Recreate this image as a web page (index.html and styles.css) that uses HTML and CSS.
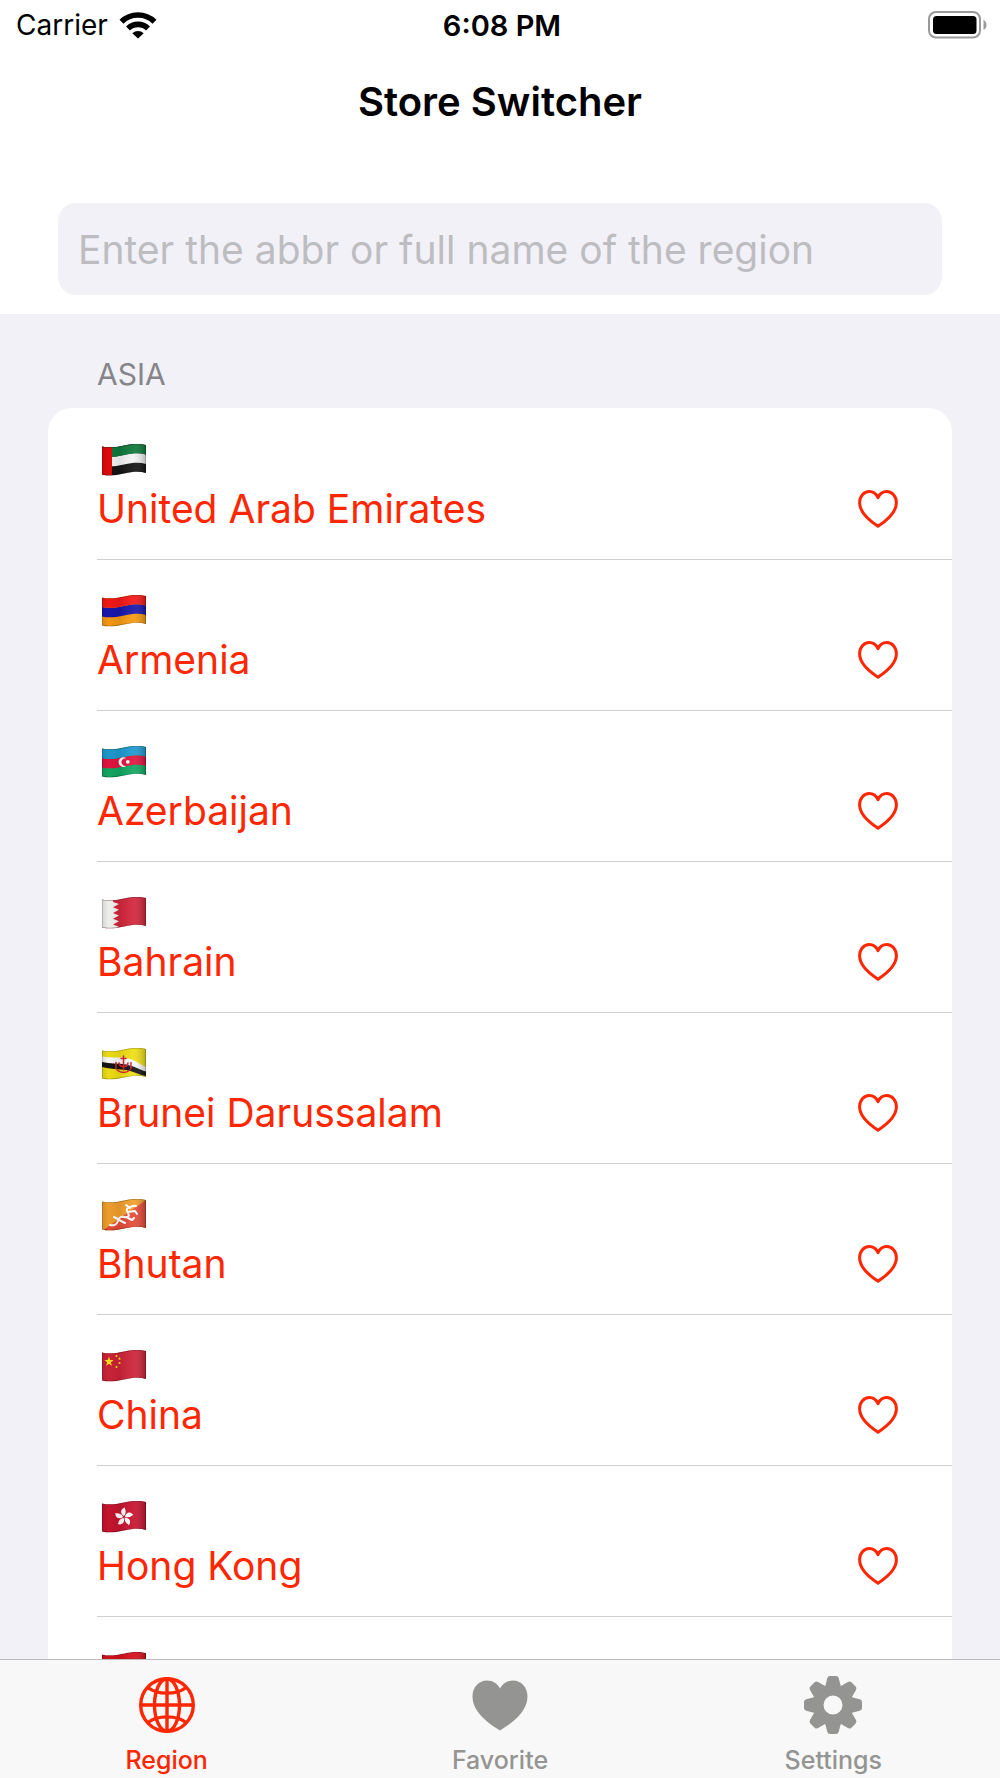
FILE: index.html
```html
<!DOCTYPE html>
<html lang="en">
<head>
  <meta charset="UTF-8" />
  <meta name="viewport" content="width=device-width, initial-scale=1.0"/>
  <title>Store Switcher</title>
  <link rel="stylesheet" href="styles.css">
</head>
<body>
  <!-- Shared shapes for flags and hearts -->
  <svg class="defs" aria-hidden="true">
    <defs>
      <clipPath id="flagClip">
        <path d="M0 2.5c6 1.5 13 1 22-1s16-2.2 22-.5v28c-6-1.7-13-1.5-22 .5s-16 2.5-22 1z"/>
      </clipPath>
      <linearGradient id="flagShade">
        <stop offset="0" stop-opacity=".12"/>
        <stop offset=".15" stop-opacity=".02"/>
        <stop offset=".4" stop-opacity=".08"/>
        <stop offset=".7" stop-color="#fff" stop-opacity=".06"/>
        <stop offset="1" stop-opacity=".25"/>
      </linearGradient>
      <path id="band" d="M0 2.5c6 1.5 13 1 22-1s16-2.2 22-.5v9.5c-6-1.7-13-1.5-22 .5s-16 2.5-22 1z"/>
      <g id="shade">
        <rect width="44" height="32" fill="url(#flagShade)"/>
        <path d="M0 2.5c6 1.5 13 1 22-1s16-2.2 22-.5v28c-6-1.7-13-1.5-22 .5s-16 2.5-22 1z" fill="none" stroke="#000" stroke-opacity=".25" stroke-width="1.4"/>
      </g>
      <path id="heart" d="M21 37.2C13 32 2.6 24 2.6 13.8C2.6 7.2 7 2.6 12.2 2.6C16 2.6 19.2 4.8 21 8.6C22.8 4.8 26 2.6 29.8 2.6C35 2.6 39.4 7.2 39.4 13.8C39.4 24 29 32 21 37.2Z"/>
    </defs>
  </svg>

  <div class="app">
    <div class="status-bar">
      <div class="carrier">
        <span>Carrier</span>
        <svg width="38" height="28" viewBox="0 0 38 28" aria-hidden="true">
          <g fill="none" stroke="#000" stroke-width="5.6">
            <path d="M2.5 10.8a23.5 23.5 0 0 1 33 0"/>
            <path d="M9 17.5a14.2 14.2 0 0 1 20 0"/>
          </g>
          <path d="M13.3 22.2a8.2 8.2 0 0 1 11.4 0L19 27.6z"/>
        </svg>
      </div>
      <time class="clock">6:08 PM</time>
      <svg class="battery" width="60" height="28" viewBox="0 0 60 28" role="img" aria-label="Battery full">
        <rect x="1" y="1" width="51" height="25.5" rx="7" fill="none" stroke="#999" stroke-width="2"/>
        <rect x="5" y="5" width="43.5" height="18" rx="3.5"/>
        <path d="M55.5 9c4 1.5 4 8.5 0 10z" fill="#999"/>
      </svg>
    </div>

    <header class="header">
      <h1>Store Switcher</h1>
      <input type="search" class="search" placeholder="Enter the abbr or full name of the region" aria-label="Region">
    </header>

    <main class="content">
      <h2>ASIA</h2>
      <ul class="regions">
        <li>
          <svg class="flag" viewBox="0 0 44 32" aria-hidden="true">
            <g clip-path="url(#flagClip)">
              <rect width="44" height="32" fill="#151515"/>
              <use href="#band" y="9.4" fill="#f4f4f4"/>
              <use href="#band" fill="#0f7a3c"/>
              <rect width="10" height="32" fill="#e40a0a"/>
              <use href="#shade"/>
            </g>
          </svg>
          <span class="name">United Arab Emirates</span>
          <button class="fav" aria-label="Add United Arab Emirates to favorites"><svg viewBox="0 0 42 40"><use href="#heart"/></svg></button>
        </li>
        <li>
          <svg class="flag" viewBox="0 0 44 32" aria-hidden="true">
            <g clip-path="url(#flagClip)">
              <rect width="44" height="32" fill="#f79a12"/>
              <use href="#band" y="9.4" fill="#1a17ad"/>
              <use href="#band" fill="#f51818"/>
              <use href="#shade"/>
            </g>
          </svg>
          <span class="name">Armenia</span>
          <button class="fav" aria-label="Add Armenia to favorites"><svg viewBox="0 0 42 40"><use href="#heart"/></svg></button>
        </li>
        <li>
          <svg class="flag" viewBox="0 0 44 32" aria-hidden="true">
            <g clip-path="url(#flagClip)">
              <rect width="44" height="32" fill="#12a862"/>
              <use href="#band" y="9.4" fill="#e2143f"/>
              <use href="#band" fill="#1e9ad0"/>
              <path d="M24.5 12.5a4.8 4.8 0 1 0 0 7.2a3.8 3.8 0 1 1 0-7.2z" fill="#fff"/>
              <circle cx="25.8" cy="15.8" r="1.9" fill="#fff"/>
              <use href="#shade"/>
            </g>
          </svg>
          <span class="name">Azerbaijan</span>
          <button class="fav" aria-label="Add Azerbaijan to favorites"><svg viewBox="0 0 42 40"><use href="#heart"/></svg></button>
        </li>
        <li>
          <svg class="flag" viewBox="0 0 44 32" aria-hidden="true">
            <g clip-path="url(#flagClip)">
              <rect width="44" height="32" fill="#d3263b"/>
              <path d="M0 0h11v5l6 2-6 3.3 6 2.5-6 3.2 6 2.5-6 3.2 6 2.5-6 3.2 6 2.4-6 3H0z" fill="#f3f3f1"/>
              <use href="#shade"/>
            </g>
          </svg>
          <span class="name">Bahrain</span>
          <button class="fav" aria-label="Add Bahrain to favorites"><svg viewBox="0 0 42 40"><use href="#heart"/></svg></button>
        </li>
        <li>
          <svg class="flag" viewBox="0 0 44 32" aria-hidden="true">
            <g clip-path="url(#flagClip)">
              <rect width="44" height="32" fill="#f0df16"/>
              <path d="M0 8.500C8 10 16 9 24 10s13 6 20 9v6c-7-1-13-4-20-5.500S8 17 0 15z" fill="#fafafa"/>
              <path d="M0 14c8 2 16 1 24 2.500s13 5 20 7v4.500c-7-1-13-5-20-6S8 21 0 19z" fill="#141414"/>
              <g fill="none" stroke="#d5202c" stroke-width="1.5" stroke-linecap="round">
                <path d="M21.5 8v14M19 10.500h5M17 15c1 5 8 5 9 0M14 14.500v6M29 14.500v6M15 22c4 3 9 3 13 0"/>
              </g>
              <use href="#shade"/>
            </g>
          </svg>
          <span class="name">Brunei Darussalam</span>
          <button class="fav" aria-label="Add Brunei Darussalam to favorites"><svg viewBox="0 0 42 40"><use href="#heart"/></svg></button>
        </li>
        <li>
          <svg class="flag" viewBox="0 0 44 32" aria-hidden="true">
            <g clip-path="url(#flagClip)">
              <rect width="44" height="32" fill="#f2a02c"/>
              <path d="M0 32L44 1v31z" fill="#e54c38"/>
              <path d="M8 26c4 1 7-1 8-4s2-5 6-4 6-1 4-4-2-5 2-6 4-2 6-1M26 13l7-1 2 3M24 18l6 3 2-2M17 21l6 3M28 9l-4-3M16 20l-4-2" fill="none" stroke="#fff" stroke-width="2" stroke-linecap="round" stroke-linejoin="round"/>
              <use href="#shade"/>
            </g>
          </svg>
          <span class="name">Bhutan</span>
          <button class="fav" aria-label="Add Bhutan to favorites"><svg viewBox="0 0 42 40"><use href="#heart"/></svg></button>
        </li>
        <li>
          <svg class="flag" viewBox="0 0 44 32" aria-hidden="true">
            <g clip-path="url(#flagClip)">
              <rect width="44" height="32" fill="#cd2438"/>
              <g fill="#ffe11a">
                <path d="M7 6.8l1.2 3.3h3.5l-2.8 2.2 1 3.4L7 13.7l-2.9 2 1-3.4-2.8-2.2h3.500z"/>
                <circle cx="14.5" cy="6" r="1.1"/>
                <circle cx="17.5" cy="8.7" r="1.1"/>
                <circle cx="17.5" cy="13" r="1.1"/>
                <circle cx="14.5" cy="17" r="1.1"/>
              </g>
              <use href="#shade"/>
            </g>
          </svg>
          <span class="name">China</span>
          <button class="fav" aria-label="Add China to favorites"><svg viewBox="0 0 42 40"><use href="#heart"/></svg></button>
        </li>
        <li>
          <svg class="flag" viewBox="0 0 44 32" aria-hidden="true">
            <g clip-path="url(#flagClip)">
              <rect width="44" height="32" fill="#c8142f"/>
              <g fill="#fff" transform="translate(22 16)">
                <path id="petal" d="M0-1C-4-3-4-8 1-9.5C.5-7.5 3.5-5.5 0-1z"/>
                <use href="#petal" transform="rotate(72)"/>
                <use href="#petal" transform="rotate(144)"/>
                <use href="#petal" transform="rotate(216)"/>
                <use href="#petal" transform="rotate(288)"/>
              </g>
              <use href="#shade"/>
            </g>
          </svg>
          <span class="name">Hong Kong</span>
          <button class="fav" aria-label="Add Hong Kong to favorites"><svg viewBox="0 0 42 40"><use href="#heart"/></svg></button>
        </li>
        <li>
          <svg class="flag" viewBox="0 0 44 32" aria-hidden="true">
            <g clip-path="url(#flagClip)">
              <rect width="44" height="32" fill="#f4f4f4"/>
              <use href="#band" y="5" fill="#d3101c"/>
              <use href="#band" fill="#d3101c"/>
              <use href="#shade"/>
            </g>
          </svg>
        </li>
      </ul>
    </main>

    <nav class="tabs">
      <a href="#region" class="active" aria-current="page">
        <svg width="58" height="58" viewBox="0 0 58 58" aria-hidden="true">
          <g fill="none" stroke="currentColor" stroke-width="3.4">
            <circle cx="29" cy="29" r="26.3"/>
            <path d="M29 2.5v53M2.5 29h53"/>
            <ellipse cx="29" cy="29" rx="12.5" ry="26.3"/>
            <path d="M10 11.5c9 7.5 29 7.5 38 0M10 46.5c9-7.5 29-7.5 38 0"/>
          </g>
        </svg>
        <span>Region</span>
      </a>
      <a href="#favorite">
        <svg width="58" height="58" viewBox="0 0 58 58" aria-hidden="true">
          <path fill="currentColor" d="M29 54.5C17 47 1.5 36 1.5 20.5C1.5 11 8 4.5 16 4.5C22 4.5 26.5 7.5 29 12.5C31.5 7.5 36 4.5 42 4.5C50 4.5 56.5 11 56.5 20.5C56.5 36 41 47 29 54.5Z"/>
        </svg>
        <span>Favorite</span>
      </a>
      <a href="#settings">
        <svg width="58" height="58" viewBox="0 0 58 58" aria-hidden="true">
          <defs>
            <path id="tooth" d="M21 11L23.3 2.2Q23.9 0 26 0H32Q34.1 0 34.7 2.2L37 11z"/>
          </defs>
          <g fill="currentColor">
            <use href="#tooth"/>
            <use href="#tooth" transform="rotate(45 29 29)"/>
            <use href="#tooth" transform="rotate(90 29 29)"/>
            <use href="#tooth" transform="rotate(135 29 29)"/>
            <use href="#tooth" transform="rotate(180 29 29)"/>
            <use href="#tooth" transform="rotate(225 29 29)"/>
            <use href="#tooth" transform="rotate(270 29 29)"/>
            <use href="#tooth" transform="rotate(315 29 29)"/>
          </g>
          <circle cx="29" cy="29" r="15" fill="none" stroke="currentColor" stroke-width="11"/>
        </svg>
        <span>Settings</span>
      </a>
    </nav>
  </div>
</body>
</html>
```
FILE: styles.css
```css
* {
  box-sizing: border-box;
}
body {
  margin: 0;
  background-color: #f2f1f7;
  color: #000;
  font-family: Inter, "Liberation Sans", sans-serif;
}
.defs {
  position: absolute;
  width: 0;
  height: 0;
}
.app {
  display: flex;
  flex-direction: column;
  height: 100vh;
}

/* Status bar */
.status-bar {
  display: grid;
  grid-template-columns: 1fr auto 1fr;
  align-items: center;
  height: 50px;
  padding: 0 12px 0 16px;
  background-color: #fff;
  font-size: 28px;
}
.carrier {
  display: flex;
  align-items: center;
  gap: 11px;
}
.clock {
  font-size: 29px;
  font-weight: 600;
}
.battery {
  justify-self: end;
}

/* Header */
.header {
  padding: 28px 58px 19px;
  background-color: #fff;
}
h1 {
  margin: 0 0 77px;
  font-size: 40px;
  font-weight: 600;
  line-height: 48px;
  text-align: center;
}
.search {
  display: block;
  width: 100%;
  height: 92px;
  padding: 0 20px;
  border: none;
  border-radius: 18px;
  background-color: #f2f1f7;
  color: #000;
  font-family: inherit;
  font-size: 39px;
}
.search::placeholder {
  color: #bdbdc1;
  opacity: 1;
}

/* Region list */
.content {
  flex: 1;
  min-height: 0;
  padding: 40px 48px 0;
  overflow-y: auto;
  scrollbar-width: none;
}
h2 {
  margin: 0 0 14px 49px;
  color: #85858a;
  font-size: 30px;
  font-weight: 400;
  line-height: 40px;
}
.regions {
  margin: 0;
  padding: 1px 0 0;
  border-radius: 24px;
  background-color: #fff;
  list-style: none;
}
.regions li {
  display: grid;
  grid-template-columns: 1fr auto;
  row-gap: 9px;
  margin-left: 49px;
  padding: 35px 53px 26px 0;
  border-bottom: 1px solid #cfcfd1;
}
.flag {
  grid-column: 1 / -1;
  width: 44px;
  height: 32px;
  margin-left: 5px;
}
.name {
  color: #ff2600;
  font-size: 39px;
  line-height: 48px;
}
.fav {
  display: flex;
  align-items: center;
  padding: 0;
  border: none;
  background: none;
  cursor: pointer;
}
.fav svg {
  width: 42px;
  height: 40px;
  fill: none;
  stroke: #ff2600;
  stroke-width: 3;
  stroke-linejoin: round;
}

/* Tab bar */
.tabs {
  display: grid;
  grid-template-columns: repeat(3, 1fr);
  height: 119px;
  padding-top: 16px;
  border-top: 1px solid #bcbcbe;
  background-color: #f8f8f8;
}
.tabs a {
  display: flex;
  flex-direction: column;
  align-items: center;
  gap: 10px;
  color: #949593;
  font-size: 25px;
  font-weight: 500;
  line-height: 32px;
  text-decoration: none;
}
.tabs a.active {
  color: #ff2600;
}
```
